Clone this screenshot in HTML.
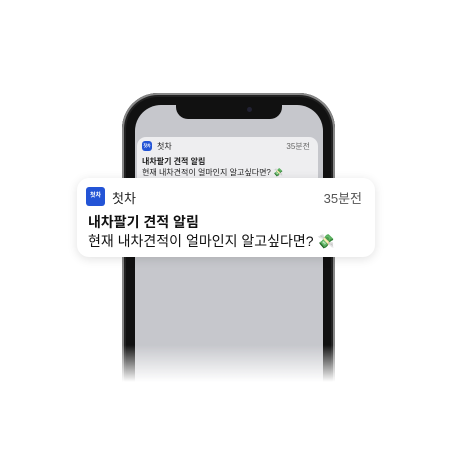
<!DOCTYPE html><html><head><meta charset="utf-8"><style>
body{margin:0;width:468px;height:468px;background:#fff;position:relative;overflow:hidden;font-family:"Liberation Sans","Noto Sans CJK KR",sans-serif}
.ph{position:absolute;left:122px;top:93px;width:213px;height:320px;border-radius:36px;background:#111;box-shadow:inset 0 0 0 2px #888,inset 0 0 0 4px #222}
.sc{position:absolute;left:135px;top:105px;width:188px;height:300px;border-radius:26px;background:#c6c7cc}
.notch{position:absolute;left:176px;top:104px;width:106px;height:15px;background:#111;border-radius:0 0 12px 12px}
.fade{position:absolute;left:0;top:345px;width:468px;height:123px;background:linear-gradient(rgba(255,255,255,0),#fff 30%)}
.sn{position:absolute;left:137px;top:137px;width:181px;height:50px;background:#eeeef0;border-radius:9px;font-size:8px;color:#222}
.card{position:absolute;left:77px;top:178px;width:298px;height:79px;background:#fff;border-radius:12px;box-shadow:0 2px 10px rgba(0,0,0,.12)}
.ic{position:absolute;background:#2354d6;border-radius:3px;color:#fff;font-weight:bold;text-align:center;overflow:hidden}
</style></head><body>
<div class="ph"></div><div class="sc"></div><div class="notch"></div>
<div style="position:absolute;left:247px;top:107px;width:5px;height:5px;border-radius:50%;background:#223"></div>
<div class="sn">
<div class="ic" style="left:5px;top:4px;width:10px;height:10px;font-size:4px;line-height:10px">첫차</div>
<div style="position:absolute;left:20px;top:4px">첫차</div>
<div style="position:absolute;right:8px;top:4px;color:#666">35분전</div>
<div style="position:absolute;left:5px;top:19px;font-weight:bold">내차팔기 견적 알림</div>
<div style="position:absolute;left:5px;top:30px">현재 내차견적이 얼마인지 알고싶다면? 💸</div>
</div>
<div class="card">
<div class="ic" style="left:9px;top:9px;width:19px;height:19px;font-size:6px;line-height:19px">첫차</div>
<div style="position:absolute;left:35px;top:10px;font-size:13px;color:#222">첫차</div>
<div style="position:absolute;right:13px;top:10px;font-size:13px;color:#555">35분전</div>
<div style="position:absolute;left:11px;top:34px;font-size:14px;font-weight:bold;color:#111">내차팔기 견적 알림</div>
<div style="position:absolute;left:11px;top:53px;font-size:14px;color:#111">현재 내차견적이 얼마인지 알고싶다면? 💸</div>
</div>
<div class="fade"></div>
</body></html>
